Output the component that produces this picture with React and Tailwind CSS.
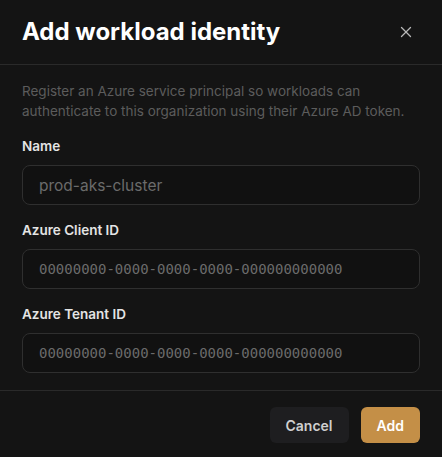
import React from "react";
import { X } from "lucide-react";

const sans = { fontFamily: "Inter, 'Noto Sans', sans-serif" };

function Field({ label, placeholder, mono }) {
  return (
    <div className="flex flex-col">
      <label className="text-[13.5px] leading-5 font-semibold text-[#e4e4e4]">{label}</label>
      <input
        type="text"
        placeholder={placeholder}
        className={
          "mt-[9px] h-10 w-full rounded-lg border border-[#2f2f2f] bg-[#111111] px-[16px] outline-none placeholder:text-[#6b6b6b] " +
          (mono ? "text-[14px] font-['DejaVu_Sans_Mono',monospace]" : "text-[15.5px]")
        }
      />
    </div>
  );
}

export default function App() {
  return (
    <div className="min-h-screen w-full bg-[#141414]" style={sans}>
      <div className="flex h-[65px] items-center justify-between border-b border-[#2a2a2a] pl-[22px] pr-[27px]">
        <h2 className="text-[24px] font-bold text-white">Add workload identity</h2>
        <button className="text-[#b8b8b8]">
          <X size={18} strokeWidth={1.75} />
        </button>
      </div>

      <div className="flex flex-col gap-[15px] border-b border-[#2a2a2a] px-[22px] pt-4 pb-[17px]">
        <p className="text-[13.5px] leading-5 text-[#5c5c5c]">
          Register an Azure service principal so workloads can authenticate to this organization using their Azure AD token.
        </p>
        <Field label="Name" placeholder="prod-aks-cluster" />
        <Field label="Azure Client ID" placeholder="00000000-0000-0000-0000-000000000000" mono />
        <Field label="Azure Tenant ID" placeholder="00000000-0000-0000-0000-000000000000" mono />
      </div>

      <div className="flex justify-end gap-3 px-[22px] pt-4 pb-4">
        <button className="h-9 rounded-md bg-[#1e1e20] px-4 text-[14px] font-semibold text-[#cfcfcf]">Cancel</button>
        <button className="h-9 rounded-md bg-[#c48f47] px-4 text-[14px] font-semibold text-white">Add</button>
      </div>
    </div>
  );
}
